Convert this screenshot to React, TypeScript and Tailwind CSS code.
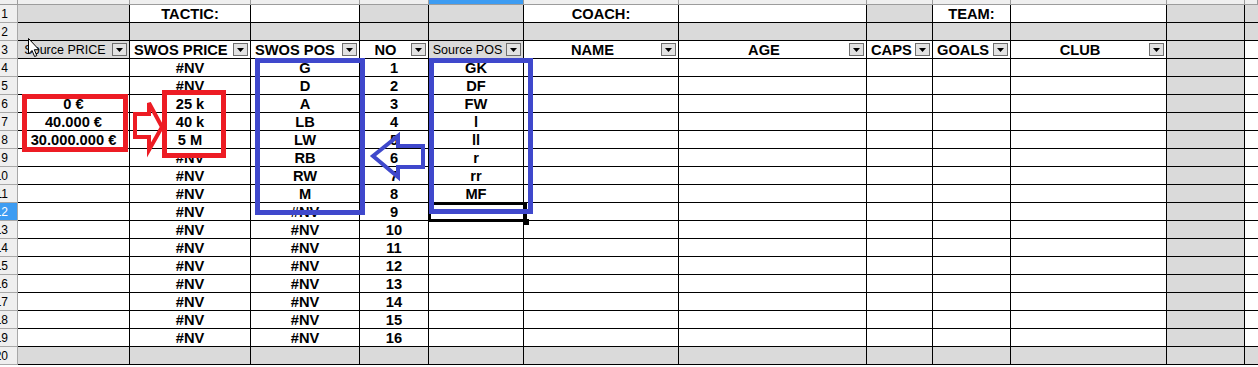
import React from "react";

type Cell = {
    t?: string;
    gray?: boolean;
    align?: "left" | "center";
    small?: boolean;
    dd?: boolean;
};

// column widths (A..L), written out so tailwind picks them up
const W = [
    "w-[112px]", "w-[121px]", "w-[109px]", "w-[69px]", "w-[95px]", "w-[155px]",
    "w-[188px]", "w-[66px]", "w-[78px]", "w-[156px]", "w-[78px]", "w-[13px]",
];

const prices = ["0 €", "40.000 €", "30.000.000 €"];
const swosPrice = ["25 k", "40 k", "5 M"];
const swosPos = ["G", "D", "A", "LB", "LW", "RB", "RW", "M"];
const srcPos = ["GK", "DF", "FW", "l", "ll", "r", "rr", "MF"];

function buildRows(): Cell[][] {
    const rows: Cell[][] = [];
    const g = (i: number[]) => (c: number) => i.includes(c);

    // row 1
    const r1Gray = g([0, 3, 4, 7, 10, 11]);
    rows.push(W.map((_, c) => ({
        gray: r1Gray(c),
        t: c === 1 ? "TACTIC:" : c === 5 ? "COACH:" : c === 8 ? "TEAM:" : undefined,
    })));
    // row 2
    rows.push(W.map(() => ({ gray: true })));
    // row 3 - headers
    rows.push([
        { t: "Source PRICE", gray: true, small: true, dd: true },
        { t: "SWOS PRICE", align: "left", dd: true },
        { t: "SWOS POS", align: "left", dd: true },
        { t: "NO", dd: true },
        { t: "Source POS", gray: true, small: true, dd: true },
        { t: "NAME", dd: true },
        { t: "AGE", dd: true },
        { t: "CAPS", align: "left", dd: true },
        { t: "GOALS", align: "left", dd: true },
        { t: "CLUB", dd: true },
        { gray: true },
        {},
    ]);
    // rows 4..19
    for (let r = 4; r <= 19; r++) {
        const i = r - 4;
        rows.push([
            { t: r >= 6 && r <= 8 ? prices[r - 6] : undefined },
            { t: r >= 6 && r <= 8 ? swosPrice[r - 6] : "#NV" },
            { t: swosPos[i] ?? "#NV" },
            { t: String(r - 3) },
            { t: srcPos[i] },
            {}, {}, {}, {}, {},
            { gray: true },
            {},
        ]);
    }
    // row 20
    rows.push(W.map(() => ({ gray: true })));
    return rows;
}

function DropDown() {
    return (
        <div className="w-[15px] h-[13px] shrink-0 mr-[2px] bg-[#e2e2e2] border border-[#6f6f6f] flex items-center justify-center">
            <svg width="7" height="4" viewBox="0 0 7 4">
                <path d="M0 0H7L3.5 4Z" fill="#000" />
            </svg>
        </div>
    );
}

export default function App() {
    const rows = buildRows();

    return (
        <div className="relative w-[1258px] h-[367px] overflow-hidden bg-white text-black font-['Liberation_Sans',Arial,sans-serif]">
            {/* column header strip, mostly scrolled away */}
            <div className="flex h-[5px] bg-[#efefef] border-b border-[#9c9c9c]">
                <div className="w-[18px] shrink-0 border-r border-[#9c9c9c]" />
                {W.map((w, c) => (
                    <div
                        key={c}
                        className={`${w} shrink-0 border-r border-[#9c9c9c] ${c === 4 ? "bg-[#3d9cf2]" : ""}`}
                    />
                ))}
            </div>

            {rows.map((row, r) => (
                <div key={r} className="flex h-[18px]">
                    {/* row number, scrolled so two digits get clipped */}
                    <div
                        className={`w-[18px] shrink-0 flex items-center justify-end pr-[9px] overflow-hidden whitespace-nowrap text-[12px] border-r border-b border-[#a8a8a8] ${
                            r === 11 ? "bg-[#3d9cf2] text-white" : "bg-[#efefef]"
                        }`}
                    >
                        {r + 1}
                    </div>
                    {row.map((cell, c) => (
                        <div
                            key={c}
                            className={`${W[c]} shrink-0 flex items-center border-b border-black whitespace-nowrap overflow-hidden ${
                                c < W.length - 1 ? "border-r" : ""
                            } ${cell.gray ? "bg-[#dadada]" : "bg-white"}`}
                        >
                            {cell.t && (
                                <span
                                    className={`flex-1 pt-[1px] ${
                                        cell.align === "left" ? "text-left pl-[4px]" : "text-center"
                                    } ${cell.small ? "text-[12.5px]" : "text-[14.67px] font-bold"}`}
                                >
                                    {cell.t}
                                </span>
                            )}
                            {cell.dd && <DropDown />}
                        </div>
                    ))}
                </div>
            ))}

            {/* selected cell E12 */}
            <div className="absolute left-[428px] top-[202px] w-[99px] h-[20px] border-[3px] border-black" />
            <div className="absolute left-[523px] top-[219px] w-[6px] h-[6px] bg-black" />

            {/* red annotation */}
            <div className="absolute left-[22px] top-[94px] w-[106px] h-[58px] border-[5px] border-[#ed1c24]" />
            <div className="absolute left-[162px] top-[90px] w-[64px] h-[68px] border-[5px] border-[#ed1c24]" />

            {/* blue annotation */}
            <div className="absolute left-[255px] top-[58px] w-[110px] h-[157px] border-[5px] border-[#3f48cc]" />
            <div className="absolute left-[429px] top-[58px] w-[104px] h-[156px] border-[5px] border-[#3f48cc]" />

            <svg className="absolute left-0 top-0 pointer-events-none" width="1258" height="367">
                <polygon
                    points="135,114 149,114 149,103 162,127 149,150 149,137 135,137"
                    fill="none"
                    stroke="#ed1c24"
                    strokeWidth="4"
                />
                <polygon
                    points="423,146 398,146 398,136 373,156 398,177 398,167 423,167"
                    fill="none"
                    stroke="#3f48cc"
                    strokeWidth="4"
                />
                {/* mouse pointer */}
                <path
                    d="M28.5 38.5 V54 L32 50.5 L34.6 56.5 L36.8 55.6 L34.3 49.7 H39 Z"
                    fill="#fff"
                    stroke="#000"
                    strokeWidth="1"
                />
            </svg>
        </div>
    );
}
